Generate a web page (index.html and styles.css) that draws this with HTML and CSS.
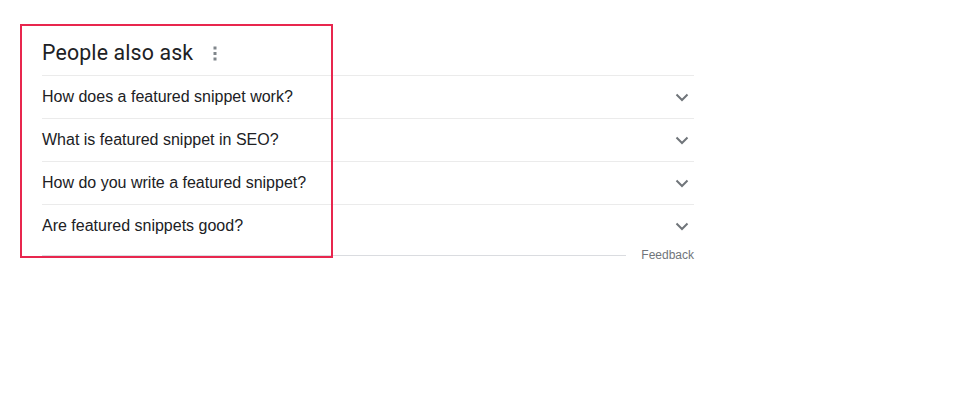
FILE: index.html
```html
<!DOCTYPE html>
<html lang="en">
<head>
    <meta charset="UTF-8">
    <title>People also ask</title>
    <link rel="stylesheet" href="styles.css">
</head>
<body>
    <div class="panel">
        <div class="heading">
            <span class="heading-title">People also ask</span>
            <svg class="dots" width="4" height="16" viewBox="0 0 4 16">
                <rect x="0.5" y="1.5" width="3" height="3" fill="#80868b"/>
                <rect x="0.5" y="7" width="3" height="3" fill="#80868b"/>
                <rect x="0.5" y="12.5" width="3" height="3" fill="#80868b"/>
            </svg>
        </div>
        <div class="question">
            <span>How does a featured snippet work?</span>
            <svg class="chevron" width="14" height="10" viewBox="0 0 14 10"><path d="M1.5 2.5 7 8 12.5 2.5" fill="none" stroke="#70757a" stroke-width="2"/></svg>
        </div>
        <div class="question">
            <span>What is featured snippet in SEO?</span>
            <svg class="chevron" width="14" height="10" viewBox="0 0 14 10"><path d="M1.5 2.5 7 8 12.5 2.5" fill="none" stroke="#70757a" stroke-width="2"/></svg>
        </div>
        <div class="question">
            <span>How do you write a featured snippet?</span>
            <svg class="chevron" width="14" height="10" viewBox="0 0 14 10"><path d="M1.5 2.5 7 8 12.5 2.5" fill="none" stroke="#70757a" stroke-width="2"/></svg>
        </div>
        <div class="question last">
            <span>Are featured snippets good?</span>
            <svg class="chevron" width="14" height="10" viewBox="0 0 14 10"><path d="M1.5 2.5 7 8 12.5 2.5" fill="none" stroke="#70757a" stroke-width="2"/></svg>
        </div>
        <div class="feedback">
            <div class="feedback-line"></div>
            <span class="feedback-text">Feedback</span>
        </div>
    </div>
    <div class="highlight"></div>
</body>
</html>
```

FILE: styles.css
```css
* {
    margin: 0;
    padding: 0;
    box-sizing: border-box;
}

body {
    background: #fff;
    font-family: 'Liberation Sans', Arial, sans-serif;
    color: #202124;
    width: 969px;
    height: 400px;
    overflow: hidden;
    position: relative;
}

.panel {
    width: 652px;
    margin: 32px 0 0 42px;
}

.heading {
    height: 44px;
    display: flex;
    align-items: center;
    border-bottom: 1px solid #ebebeb;
}

.heading-title {
    font-family: 'Roboto', 'Open Sans', sans-serif;
    font-size: 21.3px;
    color: #202124;
    letter-spacing: 0.15px;
    margin-top: -2px;
}

.dots {
    margin-left: 20px;
    margin-top: -2px;
}

.question {
    height: 43px;
    display: flex;
    align-items: center;
    justify-content: space-between;
    border-bottom: 1px solid #ebebeb;
    font-size: 16px;
    color: #202124;
}

.question.last {
    border-bottom: none;
    height: 42px;
}

.chevron {
    margin-right: 5px;
}

.feedback {
    height: 16px;
    display: flex;
    align-items: center;
}

.feedback-line {
    flex: 1;
    border-top: 1px solid #dadce0;
    margin-right: 15px;
}

.feedback-text {
    font-size: 12px;
    color: #70757a;
}

.highlight {
    position: absolute;
    left: 20px;
    top: 24px;
    width: 313px;
    height: 234px;
    border: 2px solid #e8264e;
}
```
